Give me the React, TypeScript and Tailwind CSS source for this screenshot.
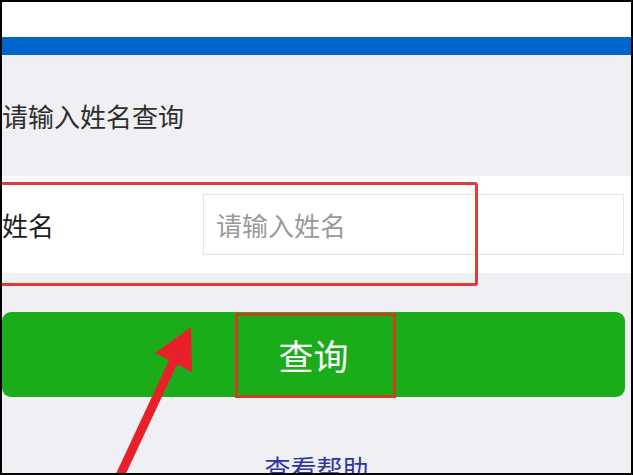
import React from "react";

export default function App() {
  return (
    <div
      className="relative box-border h-[475px] w-[633px] overflow-hidden border-2 border-black bg-[#efeff4]"
      style={{ fontFamily: '"Noto Sans CJK SC", "Noto Sans", sans-serif' }}
    >
      <div className="h-[35px] bg-white" />
      <div className="h-[18px] bg-[#0066cc]" />

      <div className="flex h-[121px] items-center">
        <span className="text-[26px] leading-none text-[#2e2e2e]">请输入姓名查询</span>
      </div>

      <div className="flex h-[97px] items-center bg-white">
        <span className="w-[201px] text-[26px] leading-none text-[#1e1e1e]">姓名</span>
        <div className="mr-[7px] flex h-[61px] flex-1 items-center border border-[#e4e4e6] bg-white pl-[12px]">
          <span className="text-[26px] leading-none text-[#9a9a9a]">请输入姓名</span>
        </div>
      </div>

      <div className="h-[39px]" />

      <div className="mr-[6px] flex h-[85px] items-center justify-center rounded-[9px] bg-[#1aad19]">
        <span className="text-[35px] leading-none text-white">查询</span>
      </div>

      <div className="mt-[58px] flex justify-center">
        <span className="text-[26px] leading-none text-[#2f33a8]">查看帮助</span>
      </div>

      {/* annotation: red box around form row */}
      <div className="absolute left-[-6px] top-[180px] h-[104px] w-[482px] rounded-[3px] border-[3px] border-[#e23a36]" />
      {/* annotation: red box around button text */}
      <div className="absolute left-[233px] top-[311px] h-[85px] w-[161px] border-[3px] border-[#c8401e]" />

      {/* annotation arrow */}
      <svg className="absolute left-[-2px] top-[-2px]" width="633" height="475" viewBox="0 0 633 475">
        <line x1="176" y1="356" x2="118" y2="480" stroke="#e8202a" strokeWidth="9" />
        <polygon points="191,327 155,353 192,372" fill="#e8202a" />
      </svg>
    </div>
  );
}
